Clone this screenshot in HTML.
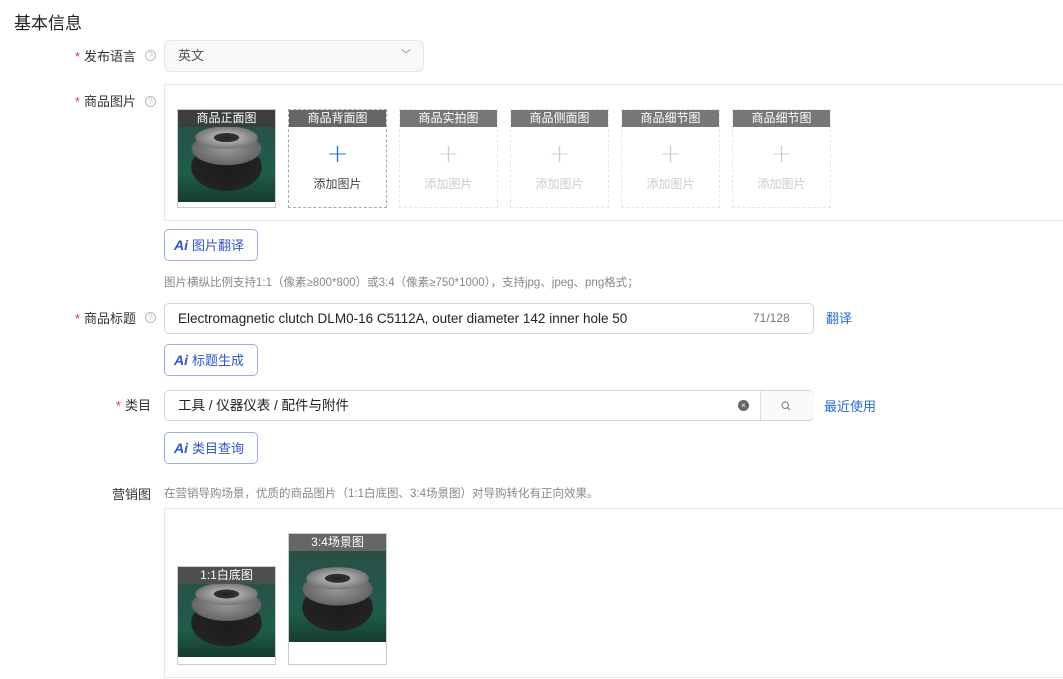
<!DOCTYPE html>
<html><head><meta charset="utf-8"><style>
*{box-sizing:border-box;margin:0;padding:0}
body{width:1063px;height:679px;background:#fff;font-family:"Liberation Sans","Noto Sans CJK SC",sans-serif;color:#333;position:relative;overflow:hidden;font-size:13px}
.a{position:absolute}
.lbl{position:absolute;right:927px;font-size:13px;color:#333;white-space:nowrap}
.lbl b{color:#e4393c;font-weight:normal;margin-right:4px}
.q{position:absolute;width:11px;height:11px;border:1px solid #bbb;border-radius:50%;font-size:8px;color:#bbb;text-align:center;line-height:9px}
.slot{position:absolute;top:109px;width:99px;height:99px;border:1px dashed #ccc;text-align:center}
.slot .h{height:17px;background:#666;color:#fff;font-size:12px;line-height:17px}
.slot .p{font-size:26px;line-height:26px;margin-top:14px;color:#ccc;font-weight:100;font-family:"DejaVu Sans",sans-serif}
.slot .t{font-size:12px;color:#ccc;margin-top:8px}
.img{background:
radial-gradient(ellipse 42% 16% at 50% 30%,#222 0,#333 30%,#aaa 32%,#777 75%,transparent 78%),
radial-gradient(ellipse 44% 22% at 50% 42%,#999 0,#666 80%,transparent 83%),
radial-gradient(ellipse 42% 30% at 50% 62%,#1c1c1c 0,#222 85%,transparent 88%),
linear-gradient(#2a4f47,#1f5c4a 70%,#153b30)}
.ai{position:absolute;left:164px;width:94px;height:32px;border:1px solid #9fb0e6;border-radius:5px;color:#3355cc;font-size:13px;line-height:30px;padding-left:9px}
.ai i{font-style:italic;font-weight:bold;font-size:14px;margin-right:4px}
.inp{position:absolute;left:164px;width:650px;height:31px;border:1px solid #d5d5d5;border-radius:5px}
.link{position:absolute;color:#2a6ad6;font-size:13px}
</style></head><body>
<div class="a" style="left:14px;top:9px;font-size:17px;color:#222">基本信息</div>

<div class="lbl" style="top:46px"><b>*</b>发布语言</div><div class="q" style="left:145px;top:50px">?</div>
<div class="a" style="left:164px;top:40px;width:260px;height:32px;background:#f6f8fa;border:1px solid #e3e6ea;border-radius:6px;padding-left:13px;line-height:30px;color:#555">英文<span class="a" style="left:236px;top:0;font-size:10px;color:#777">﹀</span></div>

<div class="lbl" style="top:91px"><b>*</b>商品图片</div><div class="q" style="left:145px;top:96px">?</div>
<div class="a" style="left:164px;top:84px;width:910px;height:137px;border:1px solid #e6e6e6"></div>
<div class="slot" style="left:177px;border:1px solid #ccc"><div class="img" style="height:92px"></div><div class="a" style="left:0;top:0;width:97px;height:17px;background:rgba(60,60,60,.9);color:#fff;font-size:12px;line-height:17px">商品正面图</div></div>
<div class="slot" style="left:288px;border-color:#aaa"><div class="h">商品背面图</div><div class="p" style="color:#1a6fe0">+</div><div class="t" style="color:#444">添加图片</div></div>
<div class="slot" style="left:399px;border-color:#e6e6e6"><div class="h" style="background:#777">商品实拍图</div><div class="p">+</div><div class="t">添加图片</div></div>
<div class="slot" style="left:510px;border-color:#e6e6e6"><div class="h" style="background:#777">商品侧面图</div><div class="p">+</div><div class="t">添加图片</div></div>
<div class="slot" style="left:621px;border-color:#e6e6e6"><div class="h" style="background:#777">商品细节图</div><div class="p">+</div><div class="t">添加图片</div></div>
<div class="slot" style="left:732px;border-color:#e6e6e6"><div class="h" style="background:#777">商品细节图</div><div class="p">+</div><div class="t">添加图片</div></div>

<div class="ai" style="top:229px"><i>Ai</i>图片翻译</div>
<div class="a" style="left:164px;top:274px;font-size:11.5px;color:#888">图片横纵比例支持1:1（像素≥800*800）或3:4（像素≥750*1000），支持jpg、jpeg、png格式；</div>

<div class="lbl" style="top:308px"><b>*</b>商品标题</div><div class="q" style="left:145px;top:312px">?</div>
<div class="inp" style="top:303px;padding-left:13px;line-height:29px;font-size:13.5px;color:#222">Electromagnetic clutch DLM0-16 C5112A, outer diameter 142 inner hole 50<span class="a" style="left:588px;top:0;font-size:12px;color:#777">71/128</span></div>
<div class="link" style="left:826px;top:308px">翻译</div>
<div class="ai" style="top:344px"><i>Ai</i>标题生成</div>

<div class="lbl" style="top:395px;right:912px"><b>*</b>类目</div>
<div class="inp" style="top:390px;padding-left:13px;line-height:29px;font-size:13.5px;color:#222">工具 / 仪器仪表 / 配件与附件
<span class="a" style="left:573px;top:9px;width:11px;height:11px;border-radius:50%;background:#666;color:#fff;font-size:8px;line-height:11px;text-align:center">×</span>
<span class="a" style="left:595px;top:0;width:54px;height:29px;border-left:1px solid #ddd;background:#fafafa;border-radius:0 5px 5px 0"><svg class="a" style="left:20px;top:10px" width="10" height="10" viewBox="0 0 10 10"><circle cx="4.2" cy="4.2" r="3.2" fill="none" stroke="#777" stroke-width="1"/><path d="M6.6 6.6L9 9" stroke="#777" stroke-width="1.1"/></svg></span></div>
<div class="link" style="left:824px;top:396px">最近使用</div>
<div class="ai" style="top:432px"><i>Ai</i>类目查询</div>

<div class="lbl" style="top:484px;right:912px">营销图</div>
<div class="a" style="left:164px;top:485px;font-size:11.5px;color:#888">在营销导购场景，优质的商品图片（1:1白底图、3:4场景图）对导购转化有正向效果。</div>
<div class="a" style="left:164px;top:508px;width:910px;height:170px;border:1px solid #e6e6e6"></div>
<div class="a" style="left:177px;top:566px;width:99px;height:99px;border:1px solid #ccc"><div class="img" style="height:90px"></div><div class="a" style="left:0;top:0;width:97px;height:17px;background:rgba(80,80,80,.9);color:#fff;font-size:12px;text-align:center;line-height:17px">1:1白底图</div></div>
<div class="a" style="left:288px;top:533px;width:99px;height:132px;border:1px solid #ccc"><div style="height:17px;background:#666;color:#fff;font-size:12px;text-align:center;line-height:17px">3:4场景图</div><div class="img" style="height:91px"></div></div>
</body></html>
